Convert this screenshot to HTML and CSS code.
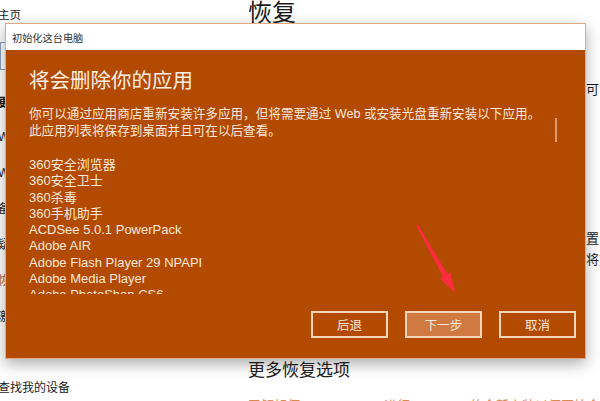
FILE: index.html
```html
<!DOCTYPE html>
<html lang="zh-CN">
<head>
<meta charset="utf-8">
<title>恢复</title>
<link rel="stylesheet" href="styles.css">
</head>
<body>
<div class="page">
  <nav class="nav">
    <div class="nav-home">主页</div>
    <div class="nav-search">查找设置</div>
    <div class="nav-head">更新和安全</div>
    <ul class="nav-list">
      <li>Windows 更新</li>
      <li>Windows Defender</li>
      <li>备份</li>
      <li>疑难解答</li>
      <li class="active">恢复</li>
      <li>激活</li>
      <li class="last">查找我的设备</li>
    </ul>
  </nav>
  <main class="main">
    <h1 class="page-title">恢复</h1>
    <h2 class="sec-title">重置此电脑</h2>
    <p class="line">如果你的电脑未正常运行，重置它可能有所帮助。重置时，可以选择保留个人文件或删除个人文件。</p>
    <p class="line">然后重新安装系统。</p>
    <div class="gap1"></div>
    <h2 class="sec-title">高级启动</h2>
    <p class="line">这个选项将会把你的电脑恢复到较早期版本的系统状态和配置，它不会影响你的文件。</p>
    <p class="line">更改电脑固件设置或启动设置，或者从系统映像还原系统。将重新启动电脑。</p>
    <div class="gap2"></div>
    <h2 class="more-title">更多恢复选项</h2>
    <p class="link"><span>了解如何</span><span class="link-b">进行 Windows 的全新安装以便开始全新的体验</span></p>
  </main>
</div>

<div class="dialog">
  <div class="titlebar">初始化这台电脑</div>
  <div class="dlg-body">
    <h2 class="dlg-title">将会删除你的应用</h2>
    <p class="dlg-text">你可以通过应用商店重新安装许多应用，但将需要通过 Web 或安装光盘重新安装以下应用。<br>此应用列表将保存到桌面并且可在以后查看。</p>
    <ul class="app-list">
      <li>360安全浏览器</li>
      <li>360安全卫士</li>
      <li>360杀毒</li>
      <li>360手机助手</li>
      <li>ACDSee 5.0.1 PowerPack</li>
      <li>Adobe AIR</li>
      <li>Adobe Flash Player 29 NPAPI</li>
      <li>Adobe Media Player</li>
      <li>Adobe PhotoShop CS6</li>
      <li>Adobe Reader XI</li>
    </ul>
    <div class="scroll-thumb"></div>
    <div class="buttons">
      <button class="btn">后退</button>
      <button class="btn primary">下一步</button>
      <button class="btn">取消</button>
    </div>
  </div>
</div>

<svg class="arrow" width="60" height="90" viewBox="410 218 60 90">
  <polygon points="416.1,225.5 417.9,224.5 447.4,274.3 450.4,272.6 455,293 440.0,278.4 443.0,276.7" fill="#ff2b3e"/>
</svg>
</body>
</html>
```

FILE: styles.css
```css
html, body {
  margin: 0;
  padding: 0;
}
body {
  width: 600px;
  height: 401px;
  overflow: hidden;
  background: #ffffff;
  font-family: "Liberation Sans", "Noto Sans CJK SC", sans-serif;
  color: #1a1a1a;
  position: relative;
}
.page {
  display: flex;
  height: 401px;
}
.nav {
  width: 252px;
  margin-left: -4px;
  flex: none;
  font-size: 12px;
}
.nav-home {
  font-size: 11.5px;
  line-height: 18px;
  padding-top: 6px;
  padding-left: 2px;
}
.nav-search {
  margin: 18px 20px 0 4px;
  height: 28px;
  border: 1px solid #8a9fc0;
  box-sizing: border-box;
  padding-left: 6px;
  line-height: 26px;
  color: #666;
}
.nav-head {
  margin-top: 24px;
  line-height: 18px;
  font-weight: bold;
  padding-left: 2px;
}
.nav-list {
  list-style: none;
  margin: 16px 0 0;
  padding: 0 0 0 2px;
}
.nav-list li {
  line-height: 18px;
  margin-bottom: 18px;
}
.nav-list li.active {
  color: #c06018;
}
.nav-list li.last {
  margin-top: 52px;
  font-family: "Noto Sans CJK SC", sans-serif;
}
.main {
  flex: 1;
  min-width: 0;
}
.page-title {
  margin: 0;
  font-size: 24px;
  line-height: 26px;
  font-weight: normal;
  color: #1a1a1a;
}
.sec-title {
  margin: 27px 0 0;
  font-size: 17px;
  line-height: 24px;
  font-weight: normal;
}
.line {
  margin: 2px 0 0;
  font-size: 13px;
  line-height: 19px;
  white-space: nowrap;
  font-family: "Noto Sans CJK SC", sans-serif;
}
.gap1 {
  height: 56px;
}
.gap2 {
  height: 89px;
}
.more-title {
  margin: 0;
  font-size: 17px;
  line-height: 24px;
  font-weight: normal;
  color: #222;
  font-family: "Noto Sans CJK SC", sans-serif;
}
.link {
  margin: 15px 0 0;
  font-size: 13px;
  line-height: 19px;
  color: #d98a50;
  white-space: nowrap;
  display: flex;
}
.link-b {
  margin-left: 84px;
}

/* dialog overlay */
.dialog {
  position: absolute;
  left: 5px;
  top: 23px;
  width: 581px;
  box-sizing: border-box;
  border: 1px solid #e2aa82;
  box-shadow: 0 5px 14px rgba(0, 0, 0, 0.32);
}
.titlebar {
  height: 26px;
  background: #ffffff;
  display: flex;
  align-items: center;
  padding-left: 6px;
  font-size: 10.2px;
  color: #333;
  font-family: "Noto Sans CJK SC", sans-serif;
}
.dlg-body {
  position: relative;
  height: 308px;
  box-sizing: border-box;
  background: #b34a02;
  padding: 14px 9px 20px 23px;
  display: flex;
  flex-direction: column;
  color: #fbe8da;
}
.dlg-title {
  margin: 0;
  font-size: 20.5px;
  line-height: 30px;
  font-weight: normal;
  font-family: "Noto Sans CJK SC", sans-serif;
  color: #fdeee2;
}
.dlg-text {
  margin: 12px 0 0;
  font-size: 12.6px;
  line-height: 17px;
  white-space: nowrap;
}
.app-list {
  list-style: none;
  margin: 17px 0 0;
  padding: 0;
  height: 137px;
  overflow: hidden;
  font-size: 13px;
  line-height: 16.3px;
}
.scroll-thumb {
  position: absolute;
  left: 549px;
  top: 68px;
  width: 2px;
  height: 24px;
  background: rgba(240, 190, 150, 0.7);
}
.buttons {
  margin-top: auto;
  display: flex;
  justify-content: flex-end;
  gap: 17px;
}
.btn {
  width: 77px;
  height: 27px;
  box-sizing: border-box;
  border: 2px solid #f6d6ba;
  background: #b34a02;
  color: #fbe8da;
  font-size: 12.5px;
  font-family: "Noto Sans CJK SC", sans-serif;
  padding: 0;
}
.btn.primary {
  background: #d07a42;
}
.arrow {
  position: absolute;
  left: 410px;
  top: 218px;
}
```
